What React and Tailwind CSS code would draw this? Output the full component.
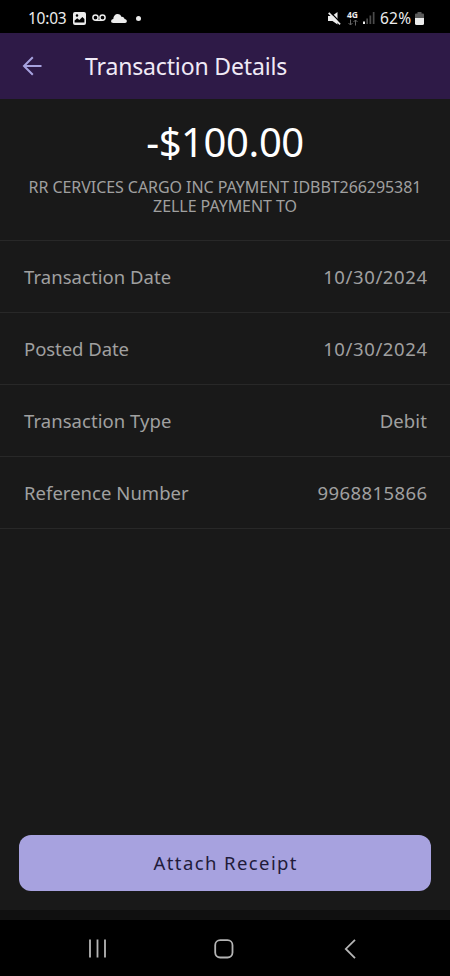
const details = [
  { label: 'Transaction Date', value: '10/30/2024', labelClass: 'tracking-[0.05px]', valueClass: 'tracking-[0.6px] -mr-[0.6px]' },
  { label: 'Posted Date', value: '10/30/2024', labelClass: 'tracking-[-0.05px]', valueClass: 'tracking-[0.6px] -mr-[0.6px]' },
  { label: 'Transaction Type', value: 'Debit', labelClass: 'tracking-[0.05px]', valueClass: 'tracking-[0.1px]' },
  { label: 'Reference Number', value: '9968815866', labelClass: 'tracking-[0.03px]', valueClass: 'tracking-[0.4px] -mr-[0.4px]' },
];

const StatusBar = () => (
  <div className="flex h-[33px] shrink-0 items-center justify-between bg-black pr-[26px] pl-[28px] pt-[3px] text-[#ececec]">
    <div className="flex items-center">
      <span className="w-[45px] pt-[2px] text-[15.5px] leading-none tracking-[-0.25px] whitespace-nowrap">10:03</span>
      <svg className="h-[13px] w-[13px]" viewBox="0 0 13 13">
        <path fillRule="evenodd" fill="currentColor" d="M2 0h9a2 2 0 0 1 2 2v9a2 2 0 0 1-2 2H2a2 2 0 0 1-2-2V2a2 2 0 0 1 2-2zM1.6 10.4h9.8V7L9.4 4.9 6.3 8 4.2 6.2 1.6 8.6zM4 2.2a1.3 1.3 0 1 0 0 2.6 1.3 1.3 0 0 0 0-2.6z" />
      </svg>
      <svg className="ml-[6px] h-[8px] w-[14px]" viewBox="0 0 14 8" fill="none" stroke="currentColor" strokeWidth="1.5">
        <circle cx="3.5" cy="3.6" r="2.6" />
        <circle cx="10.5" cy="3.6" r="2.6" />
        <path d="M3.5 6.3h7" />
      </svg>
      <svg className="ml-[5px] h-[9px] w-[16px]" viewBox="0 0 16 9" fill="currentColor">
        <path d="M2.4 9C.6 9 0 8 .1 7 .3 5.9 1.3 5.2 2.3 5.1 2.3 2 4.2 0 6.6 0c2 0 3.3 1.1 3.9 2.9 1.8-.2 2.8.8 3 2.2 1.5.1 2.3 1 2.3 2.2C15.8 8.3 15.2 9 14 9z" />
      </svg>
      <span className="ml-[9px] size-[5px] rounded-full bg-[#ececec]" />
    </div>
    <div className="flex items-center">
      <svg className="h-[13px] w-[13px]" viewBox="0 0 13 13">
        <path fill="currentColor" d="M0 4h4L9.5 0v12.5L4.5 9H0z" />
        <path d="M2.2 0l11 11.5" stroke="#000" strokeWidth="1.3" />
        <path d="M.7.8l11.4 11.6" stroke="currentColor" strokeWidth="1.7" />
      </svg>
      <div className="ml-[6px] flex w-[11px] flex-col items-center">
        <span className="text-[8.5px] leading-[8px] font-bold">4G</span>
        <svg className="h-[7px] w-[10px] text-[#666]" viewBox="0 0 10 7" fill="none" stroke="currentColor" strokeWidth="1">
          <path d="M2.5 0.5v5.500M0.5 4l2 2 2-2M7.5 6.5V1M5.5 3l2-2 2 2" />
        </svg>
      </div>
      <svg className="ml-[5px] h-[12px] w-[12px]" viewBox="0 0 12 12">
        <path fill="#ececec" d="M0 9.5h2V12H0z" />
        <path fill="#4b4b4b" d="M3.3 6.5h1.7V12H3.3zM6.5 3.5h1.7V12H6.5zM9.8 0h1.7v12H9.8z" />
      </svg>
      <span className="ml-[5px] w-[35px] pt-[2px] text-[15.5px] leading-none tracking-[0.2px] whitespace-nowrap">62%</span>
      <svg className="h-[13px] w-[9px]" viewBox="0 0 9 13">
        <path fill="#5a5a5a" d="M2.5 0h4v1.5H8a1 1 0 0 1 1 1V7H0V2.5a1 1 0 0 1 1-1h1.5z" />
        <path fill="#ececec" d="M0 6h9v5.5a1.5 1.5 0 0 1-1.5 1.5h-6A1.5 1.5 0 0 1 0 11.5z" />
      </svg>
    </div>
  </div>
);

const Header = () => (
  <header className="flex h-[65.5px] shrink-0 items-center bg-[#2e1a47] pl-[22px]">
    <svg className="h-[20px] w-[20px] text-[#a7a2df]" viewBox="0 0 20 20" fill="none" stroke="currentColor" strokeWidth="2">
      <path d="M19.5 10H2M10.8 1.2L2 10l8.8 8.8" />
    </svg>
    <h1 className="ml-[43px] pt-[1.5px] text-[23px] leading-none tracking-[-0.15px] whitespace-nowrap text-[#f0eaf6]">Transaction Details</h1>
  </header>
);

const DetailRow = ({ label, value, labelClass, valueClass }) => (
  <div className="flex h-[72.2px] items-center justify-between border-b border-[#282828] pt-[2px] pr-[23px] pl-6 text-[18.5px] leading-none text-[#a0a0a0]">
    <span className={labelClass}>{label}</span>
    <span className={valueClass}>{value}</span>
  </div>
);

const NavBar = () => (
  <nav className="flex h-[56px] shrink-0 items-center bg-black pt-[1px] pl-[88px] text-[#b5b5b5]">
    <svg className="h-[19px] w-[18px]" viewBox="0 0 18 19" stroke="currentColor" strokeWidth="1.8">
      <path d="M2 .5v18M9.5 .5v18M17 .5v18" />
    </svg>
    <svg className="ml-[107.5px] h-[20px] w-[20px]" viewBox="0 0 20 20" fill="none" stroke="currentColor" strokeWidth="1.8">
      <rect x="1.2" y="1.2" width="17.3" height="17.3" rx="5" />
    </svg>
    <svg className="ml-[110px] h-[20px] w-[12px]" viewBox="0 0 12 20" fill="none" stroke="currentColor" strokeWidth="1.8">
      <path d="M11 .8L1.8 9.9l9.2 9.2" />
    </svg>
  </nav>
);

export default function App() {
  return (
    <div className="flex h-[976px] w-[450px] flex-col overflow-hidden bg-[#191919] font-['Noto_Sans',sans-serif]">
      <StatusBar />
      <Header />
      <main className="flex flex-1 flex-col">
        <section className="flex h-[142px] shrink-0 flex-col items-center border-b border-[#282828] pt-[20px] text-center">
          <p className="text-[40px] leading-[46px] tracking-[-0.4px] text-white">-$100.00</p>
          <p className="mt-[13.5px] w-[400px] text-[16px] leading-[19px] tracking-[-0.06px] text-[#a0a0a0]">
            RR CERVICES CARGO INC PAYMENT IDBBT266295381 ZELLE PAYMENT TO
          </p>
        </section>
        {details.map((item) => (
          <DetailRow key={item.label} {...item} />
        ))}
        <button className="mx-[19px] mt-auto mb-[19px] h-[56px] rounded-xl bg-[#a7a2df] pt-[1px] pl-[1.5px] text-[18.5px] leading-none tracking-[1.4px] text-[#211b3a]">
          Attach Receipt
        </button>
      </main>
      <div className="h-[10px] shrink-0 bg-[#101010]" />
      <NavBar />
    </div>
  );
}
